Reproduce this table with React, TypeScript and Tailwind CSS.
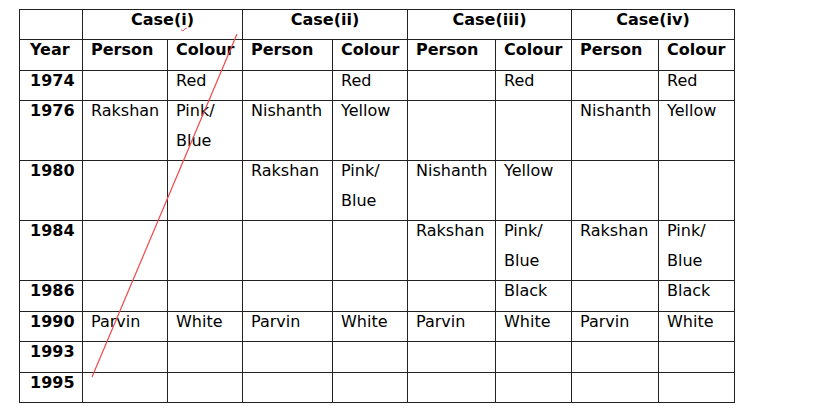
const rows: { year: string; cells: string[][]; extra?: boolean }[] = [
  { year: "1974", cells: [[], ["Red"], [], ["Red"], [], ["Red"], [], ["Red"]] },
  { year: "1976", cells: [["Rakshan"], ["Pink/", "Blue"], ["Nishanth"], ["Yellow"], [], [], ["Nishanth"], ["Yellow"]] },
  { year: "1980", cells: [[], [], ["Rakshan"], ["Pink/", "Blue"], ["Nishanth"], ["Yellow"], [], []] },
  { year: "1984", cells: [[], [], [], [], ["Rakshan"], ["Pink/", "Blue"], ["Rakshan"], ["Pink/", "Blue"]] },
  { year: "1986", extra: true, cells: [[], [], [], [], [], ["Black"], [], ["Black"]] },
  { year: "1990", cells: [["Parvin"], ["White"], ["Parvin"], ["White"], ["Parvin"], ["White"], ["Parvin"], ["White"]] },
  { year: "1993", extra: true, cells: [[], [], [], [], [], [], [], []] },
  { year: "1995", cells: [[], [], [], [], [], [], [], []] },
];

const td = "border border-[#222] p-0 align-top";

function Lines({ items, extra, className = "pl-[8px]" }: { items: string[]; extra?: boolean; className?: string }) {
  return (
    <div className={`-mt-[5px] leading-[30px] whitespace-nowrap ${extra ? "mb-[5px]" : "mb-[4px]"} ${className}`}>
      {items.length === 0 ? "\u00a0" : items.map((t, i) => <div key={i}>{t}</div>)}
    </div>
  );
}

export default function App() {
  return (
    <div className="min-h-[409px] w-[828px] bg-white pl-[19px] pt-[9px] text-[16px] text-black" style={{ fontFamily: '"DejaVu Sans", Verdana, sans-serif' }}>
      <div className="relative w-[715px]">
        <table className="w-[715px] table-fixed border-collapse">
          <colgroup>
            <col className="w-[63px]" />
            <col className="w-[85px]" />
            <col className="w-[75px]" />
            <col className="w-[90px]" />
            <col className="w-[75px]" />
            <col className="w-[88px]" />
            <col className="w-[76px]" />
            <col className="w-[87px]" />
            <col className="w-[76px]" />
          </colgroup>
          <tbody>
            <tr>
              <td className={td}><Lines items={[]} /></td>
              {["Case(i)", "Case(ii)", "Case(iii)", "Case(iv)"].map((c, i) => (
                <td key={c} colSpan={2} className={`${td} text-center font-bold`}>
                  <div className="-mt-[5px] mb-[4px] leading-[30px]">
                    {i === 0 ? (
                      <>
                        Case(<span className="underline decoration-wavy decoration-red-500 decoration-1 underline-offset-2">i</span>)
                      </>
                    ) : (
                      c
                    )}
                  </div>
                </td>
              ))}
            </tr>
            <tr className="font-bold">
              <td className={td}>
                <Lines items={["Year"]} extra className="pl-[10px]" />
              </td>
              {[0, 1, 2, 3].flatMap((i) => [
                <td key={`p${i}`} className={td}><Lines items={["Person"]} extra /></td>,
                <td key={`c${i}`} className={td}><Lines items={["Colour"]} extra /></td>,
              ])}
            </tr>
            {rows.map((r) => (
              <tr key={r.year}>
                <td className={`${td} font-bold`}>
                  <Lines items={[r.year]} extra={r.extra} className="pl-[10px]" />
                </td>
                {r.cells.map((c, i) => (
                  <td key={i} className={td}>
                    <Lines items={c} extra={r.extra} />
                  </td>
                ))}
              </tr>
            ))}
          </tbody>
        </table>
        <svg className="pointer-events-none absolute left-0 top-0" width="715" height="400">
          <line x1="218" y1="25" x2="73" y2="368" stroke="#f04848" strokeWidth="1.2" />
        </svg>
      </div>
    </div>
  );
}
